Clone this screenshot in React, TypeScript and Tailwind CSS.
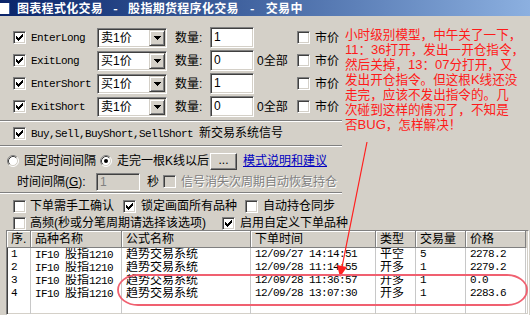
import React from 'react';

const sunken =
  'border border-t-[#808080] border-l-[#808080] border-b-white border-r-white shadow-[inset_1px_1px_0_#404040,inset_-1px_-1px_0_#d4d0c8]';
const raised =
  'border border-t-[#d4d0c8] border-l-[#d4d0c8] border-b-[#404040] border-r-[#404040] shadow-[inset_1px_1px_0_#ffffff,inset_-1px_-1px_0_#808080]';
const mono = "font-['Liberation_Mono',monospace] text-[11px] tracking-[-0.6px]";

function M({ children }: { children: React.ReactNode }) {
  return <span className={mono}>{children}</span>;
}

function A({ children }: { children: React.ReactNode }) {
  return <span className="font-['Liberation_Sans',sans-serif] text-[13px] leading-[15px]">{children}</span>;
}

function CheckMark() {
  const runs: [number, number, number][] = [
    [6, 0, 1],
    [5, 1, 2],
    [0, 2, 1],
    [4, 2, 3],
    [0, 3, 2],
    [3, 3, 3],
    [0, 4, 5],
    [1, 5, 3],
    [2, 6, 1],
  ];
  return (
    <svg width="7" height="7" viewBox="0 0 7 7" shapeRendering="crispEdges">
      {runs.map(([x, y, w], i) => (
        <rect key={i} x={x} y={y} width={w} height={1} fill="#000" />
      ))}
    </svg>
  );
}

function Check({ checked, disabled }: { checked?: boolean; disabled?: boolean }) {
  return (
    <div
      className={`w-[13px] h-[13px] shrink-0 flex items-center justify-center ${sunken} ${
        disabled ? 'bg-[#d4d0c8]' : 'bg-white'
      }`}
    >
      {checked && <CheckMark />}
    </div>
  );
}

function Radio({ checked }: { checked?: boolean }) {
  return (
    <svg width="12" height="12" viewBox="0 0 12 12" className="shrink-0">
      <circle cx="6" cy="6" r="5" fill="#fff" />
      <path d="M2.11 9.89 A5.5 5.5 0 0 1 9.89 2.11" stroke="#808080" strokeWidth="1" fill="none" />
      <path d="M9.89 2.11 A5.5 5.5 0 0 1 2.11 9.89" stroke="#ffffff" strokeWidth="1" fill="none" />
      <path d="M2.82 9.18 A4.5 4.5 0 0 1 9.18 2.82" stroke="#404040" strokeWidth="1" fill="none" />
      <path d="M9.18 2.82 A4.5 4.5 0 0 1 2.82 9.18" stroke="#d4d0c8" strokeWidth="1" fill="none" />
      {checked && <circle cx="6" cy="6" r="2" fill="#000" />}
    </svg>
  );
}

function Select({ value }: { value: string }) {
  return (
    <div className={`w-[70px] h-[20px] shrink-0 bg-white flex items-center justify-between pl-[3px] pr-[1px] ${sunken}`}>
      <span className="leading-[14px]">
        {value[0]}
        <span className="font-['Liberation_Sans'] text-[12px]">1</span>
        {value[2]}
      </span>
      <div className={`w-[16px] h-[16px] bg-[#d4d0c8] flex items-center justify-center ${raised}`}>
        <svg width="7" height="4" viewBox="0 0 7 4" shapeRendering="crispEdges">
          <path d="M0 0 H7 V1 H6 V2 H5 V3 H4 V4 H3 V3 H2 V2 H1 V1 H0 Z" fill="#000" />
        </svg>
      </div>
    </div>
  );
}

function Sep() {
  return <div className="w-[342px] h-[2px] shrink-0 border-t border-t-[#808080] border-b border-b-white" />;
}

function OrderRow({ label, price, qty, all }: { label: string; price: string; qty: string; all?: boolean }) {
  return (
    <div className="flex items-center h-[23px] shrink-0">
      <div className="ml-[13px]">
        <Check checked />
      </div>
      <div className={`ml-[5px] w-[66px] ${mono}`}>{label}</div>
      <Select value={price} />
      <div className="ml-[8px] w-[35px]">
        数量<span className="font-['Liberation_Sans']">:</span>
      </div>
      <div className={`w-[44px] h-[21px] shrink-0 bg-white pl-[3px] pt-[2px] font-['Liberation_Sans'] text-[12px] leading-[14px] ${sunken}`}>
        {qty}
      </div>
      <div className="w-[43px] pl-[3px] whitespace-nowrap">
        {all ? (
          <>
            <span className="font-['Liberation_Sans']">0</span>全部
          </>
        ) : null}
      </div>
      <Check />
      <div className="ml-[5px]">市价</div>
    </div>
  );
}

const cols = [24, 91, 129, 125, 40, 50, 60];
const headers = ['序.', '品种名称', '公式名称', '下单时间', '类型', '交易量', '价格'];

const rows: React.ReactNode[][] = [
  ['1', '12/09/27 14:14:51', '平空', '5', '2278.2'],
  ['2', '12/09/28 11:14:55', '开多', '1', '2279.2'],
  ['3', '12/09/28 11:36:57', '开多', '1', '0.0'],
  ['4', '12/09/28 13:07:30', '开多', '1', '2283.6'],
].map(([n, t, type, q, p]) => [
  <M>{n}</M>,
  <span className="whitespace-pre">
    <M>IF10 </M>股指<M>1210</M>
  </span>,
  <span>趋势交易系统</span>,
  <M>{t}</M>,
  <span>{type}</span>,
  <M>{q}</M>,
  <M>{p}</M>,
]);

function Table() {
  return (
    <div className={`ml-[6px] w-[523px] flex-1 flex flex-col bg-white overflow-hidden ${sunken}`}>
      <div className="flex h-[17px] shrink-0 bg-[#d4d0c8]">
        {headers.map((h, i) => (
          <div
            key={i}
            style={{ width: cols[i] }}
            className="h-full shrink-0 pl-[4px] flex items-center border-r border-b border-r-[#808080] border-b-[#808080] shadow-[inset_1px_1px_0_#ffffff] whitespace-nowrap overflow-hidden"
          >
            {h}
          </div>
        ))}
      </div>
      {rows.map((r, ri) => (
        <div key={ri} className="flex h-[13px] shrink-0">
          {r.map((c, i) => (
            <div
              key={i}
              style={{ width: cols[i] }}
              className="h-full shrink-0 pl-[4px] flex items-center border-r border-r-[#c8c8c8] whitespace-nowrap overflow-hidden leading-[13px]"
            >
              {c}
            </div>
          ))}
        </div>
      ))}
      <div className="flex flex-1">
        {cols.map((w, i) => (
          <div key={i} style={{ width: w }} className="h-full shrink-0 border-r border-r-[#c8c8c8]" />
        ))}
      </div>
    </div>
  );
}

export default function App() {
  return (
    <div className="relative w-[530px] h-[315px] overflow-hidden bg-[#d4d0c8] text-black text-[12px] leading-[14px] font-['Liberation_Sans','Noto_Sans_CJK_SC',sans-serif] flex flex-col">
      {/* title bar */}
      <div className="h-[16px] shrink-0 flex items-center bg-gradient-to-r from-[#0a246a] to-[#8cb0e0] text-white font-bold">
        <div className="w-[10px] h-[11px] bg-white border-r border-r-[#4060a0] shrink-0" />
        <div className="ml-[7px] flex items-center tracking-[0.3px] whitespace-nowrap font-['Noto_Sans_CJK_SC',sans-serif]">
          <span>图表程式化交易</span>
          <span className="w-[25px] text-center">-</span>
          <span>股指期货程序化交易</span>
          <span className="w-[27px] text-center">-</span>
          <span>交易中</span>
        </div>
      </div>

      <div className="h-[10px] shrink-0" />
      <OrderRow label="EnterLong" price="卖1价" qty="1" />
      <OrderRow label="ExitLong" price="买1价" qty="0" all />
      <OrderRow label="EnterShort" price="买1价" qty="1" />
      <OrderRow label="ExitShort" price="卖1价" qty="0" all />
      <div className="h-[2px] shrink-0" />
      <Sep />
      <div className="flex items-center h-[23px] shrink-0">
        <div className="ml-[13px]">
          <Check checked />
        </div>
        <div className="ml-[5px] whitespace-pre">
          <M>Buy,Sell,BuyShort,SellShort </M>新交易系统信号
        </div>
      </div>
      <Sep />
      <div className="h-[3px] shrink-0" />
      <div className="flex items-center h-[22px] shrink-0">
        <div className="ml-[7px]">
          <Radio />
        </div>
        <div className="ml-[5px] w-[72px] whitespace-nowrap">固定时间间隔</div>
        <div className="ml-[4px]">
          <Radio checked />
        </div>
        <div className="ml-[5px] w-[93px] whitespace-nowrap">
          走完一根<span className="font-['Liberation_Sans']">K</span>线以后
        </div>
        <div className="w-[27px] h-[17px] shrink-0 bg-[#d4d0c8] flex items-center justify-center border border-t-white border-l-white border-b-[#404040] border-r-[#404040] shadow-[inset_-1px_-1px_0_#808080] pb-[3px] font-['Liberation_Sans']">
          ...
        </div>
        <div className="ml-[6px] text-[#0000c0] underline whitespace-nowrap">模式说明和建议</div>
      </div>
      <div className="flex items-center h-[19px] shrink-0">
        <div className="ml-[17px] w-[79px] whitespace-nowrap">
          时间间隔<span className="font-['Liberation_Sans']">(</span>
          <span className="font-['Liberation_Sans'] underline">G</span>
          <span className="font-['Liberation_Sans']">):</span>
        </div>
        <div className={`w-[44px] h-[18px] shrink-0 bg-[#d4d0c8] pl-[3px] pt-[1px] text-[#808080] font-['Liberation_Sans'] ${sunken}`}>
          1
        </div>
        <div className="ml-[7px] w-[12px]">秒</div>
        <div className="ml-[4px]">
          <Check disabled />
        </div>
        <div className="ml-[5px] whitespace-nowrap text-[#808080] [text-shadow:1px_1px_0_#ffffff]">信号消失次周期自动恢复持仓</div>
      </div>
      <div className="h-[1px] shrink-0" />
      <Sep />
      <div className="h-[2px] shrink-0" />
      <div className="flex items-center h-[20px] shrink-0">
        <div className="ml-[13px] w-[110px] flex items-center">
          <Check />
          <span className="ml-[4px] whitespace-nowrap">下单需手工确认</span>
        </div>
        <div className="w-[122px] flex items-center">
          <Check checked />
          <span className="ml-[5px] whitespace-nowrap">锁定画面所有品种</span>
        </div>
        <Check />
        <span className="ml-[5px] whitespace-nowrap">自动持仓同步</span>
      </div>
      <div className="flex items-center h-[14px] shrink-0">
        <div className="ml-[13px] w-[209px] flex items-center">
          <Check />
          <span className="ml-[4px] whitespace-nowrap">
            高频<span className="font-['Liberation_Sans']">(</span>秒或分笔周期请选择该选项
            <span className="font-['Liberation_Sans']">)</span>
          </span>
        </div>
        <Check checked />
        <span className="ml-[5px] whitespace-nowrap">启用自定义下单品种</span>
      </div>
      <Table />

      {/* annotation overlay */}
      <div className="absolute left-[345px] top-[26px] text-[12.6px] leading-[15px] text-[#ff1a1a] font-['Noto_Sans_CJK_SC',sans-serif] whitespace-nowrap pointer-events-none">
        <div className="h-[15px]">小时级别模型，中午关了一下，</div>
        <div className="h-[15px]">
          <A>11</A>：<A>36</A>打开，发出一开仓指令，
        </div>
        <div className="h-[15px]">
          然后关掉，<A>13</A>：<A>07</A>分打开，又
        </div>
        <div className="h-[15px]">
          发出开仓指令。但这根<A>K</A>线还没
        </div>
        <div className="h-[15px]">走完，应该不发出指令的。几</div>
        <div className="h-[15px]">次碰到这样的情况了，不知是</div>
        <div className="h-[15px]">
          否<A>BUG</A>，怎样解决！
        </div>
      </div>
      <svg className="absolute inset-0 pointer-events-none" width="530" height="315" viewBox="0 0 530 315">
        <line x1="367" y1="142" x2="342" y2="267" stroke="#ff2020" strokeWidth="1.2" />
        <polygon points="340,277 347,267 337,265" fill="#ff2020" />
        <rect x="118" y="275" width="409" height="30" rx="20" ry="15" fill="none" stroke="#f06070" strokeWidth="1.8" />
      </svg>
    </div>
  );
}
